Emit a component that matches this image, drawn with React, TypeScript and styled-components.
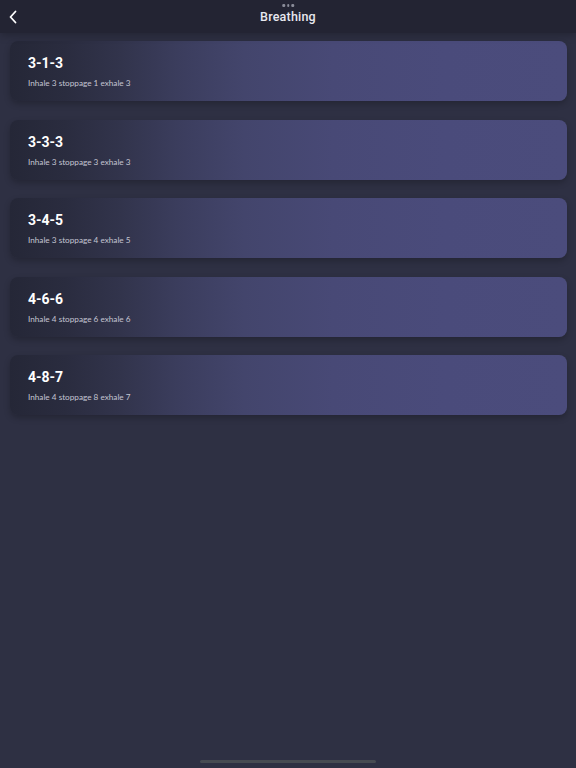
import React from 'react';
import styled, { createGlobalStyle } from 'styled-components';

const GlobalStyle = createGlobalStyle`
  html, body {
    margin: 0;
    padding: 0;
    background: #2e3043;
  }
  body {
    font-family: Roboto, "Noto Sans", sans-serif;
    -webkit-font-smoothing: antialiased;
  }
`;

const patterns = [
  { name: '3-1-3', inhale: 3, hold: 1, exhale: 3 },
  { name: '3-3-3', inhale: 3, hold: 3, exhale: 3 },
  { name: '3-4-5', inhale: 3, hold: 4, exhale: 5 },
  { name: '4-6-6', inhale: 4, hold: 6, exhale: 6 },
  { name: '4-8-7', inhale: 4, hold: 8, exhale: 7 },
];

export default function App() {
  return (
    <>
      <GlobalStyle />
      <Screen>
        <Header>
          <Grabber>
            <Dot />
            <Dot />
            <Dot />
          </Grabber>
          <BackButton aria-label="Back">
            <svg width="10" height="14" viewBox="0 0 10 14" fill="none" stroke="#ffffff" strokeWidth="1.8" strokeLinecap="round" strokeLinejoin="round">
              <polyline points="7.5 1.5 2.5 7 7.5 12.5" />
            </svg>
          </BackButton>
          <Title>Breathing</Title>
        </Header>

        <List>
          {patterns.map((p) => (
            <Card key={p.name}>
              <CardTitle>{p.name}</CardTitle>
              <CardText>
                Inhale {p.inhale} stoppage {p.hold} exhale {p.exhale}
              </CardText>
            </Card>
          ))}
        </List>

        <HomeIndicator />
      </Screen>
    </>
  );
}

const Screen = styled.div`
  position: relative;
  width: 576px;
  height: 768px;
  background: #2e3043;
  overflow: hidden;
`;

const Header = styled.header`
  position: relative;
  height: 33px;
  background: #232433;
  display: flex;
  align-items: center;
  justify-content: center;
  box-shadow: 0 2px 8px rgba(0, 0, 0, 0.25);
`;

const Grabber = styled.div`
  position: absolute;
  top: 4px;
  left: 50%;
  transform: translateX(-50%);
  display: flex;
  gap: 2px;
`;

const Dot = styled.span`
  width: 2.5px;
  height: 2.5px;
  border-radius: 50%;
  background: #8a8c99;
`;

const BackButton = styled.button`
  position: absolute;
  left: 7px;
  top: 9px;
  background: none;
  border: none;
  padding: 0;
  width: 12px;
  height: 16px;
  display: flex;
  align-items: center;
  justify-content: center;
`;

const Title = styled.h1`
  margin: 0;
  font-size: 12.5px;
  font-weight: 500;
  color: #e8e8ef;
  letter-spacing: 0.2px;
`;

const List = styled.div`
  display: flex;
  flex-direction: column;
  gap: 18.5px;
  padding: 8px 9px 0 10px;
`;

const Card = styled.div`
  height: 60px;
  box-sizing: border-box;
  padding: 14px 18px 0;
  border-radius: 8px;
  background: linear-gradient(
    to right,
    #252737 0%,
    #2a2c3f 10%,
    #32344c 20%,
    #3b3d5d 30%,
    #43456c 42%,
    #484976 58%,
    #4a4b7b 78%,
    #4b4c7c 100%
  );
  box-shadow: 0 3px 6px rgba(0, 0, 0, 0.22);
`;

const CardTitle = styled.div`
  font-size: 14px;
  font-weight: 700;
  color: #ffffff;
  line-height: 16px;
`;

const CardText = styled.div`
  margin-top: 7px;
  font-family: Lato, "Noto Sans", sans-serif;
  font-size: 8.2px;
  color: #c4c5d2;
  line-height: 10px;
`;

const HomeIndicator = styled.div`
  position: absolute;
  bottom: 5px;
  left: 200px;
  width: 176px;
  height: 3px;
  border-radius: 2px;
  background: #474b52;
`;
